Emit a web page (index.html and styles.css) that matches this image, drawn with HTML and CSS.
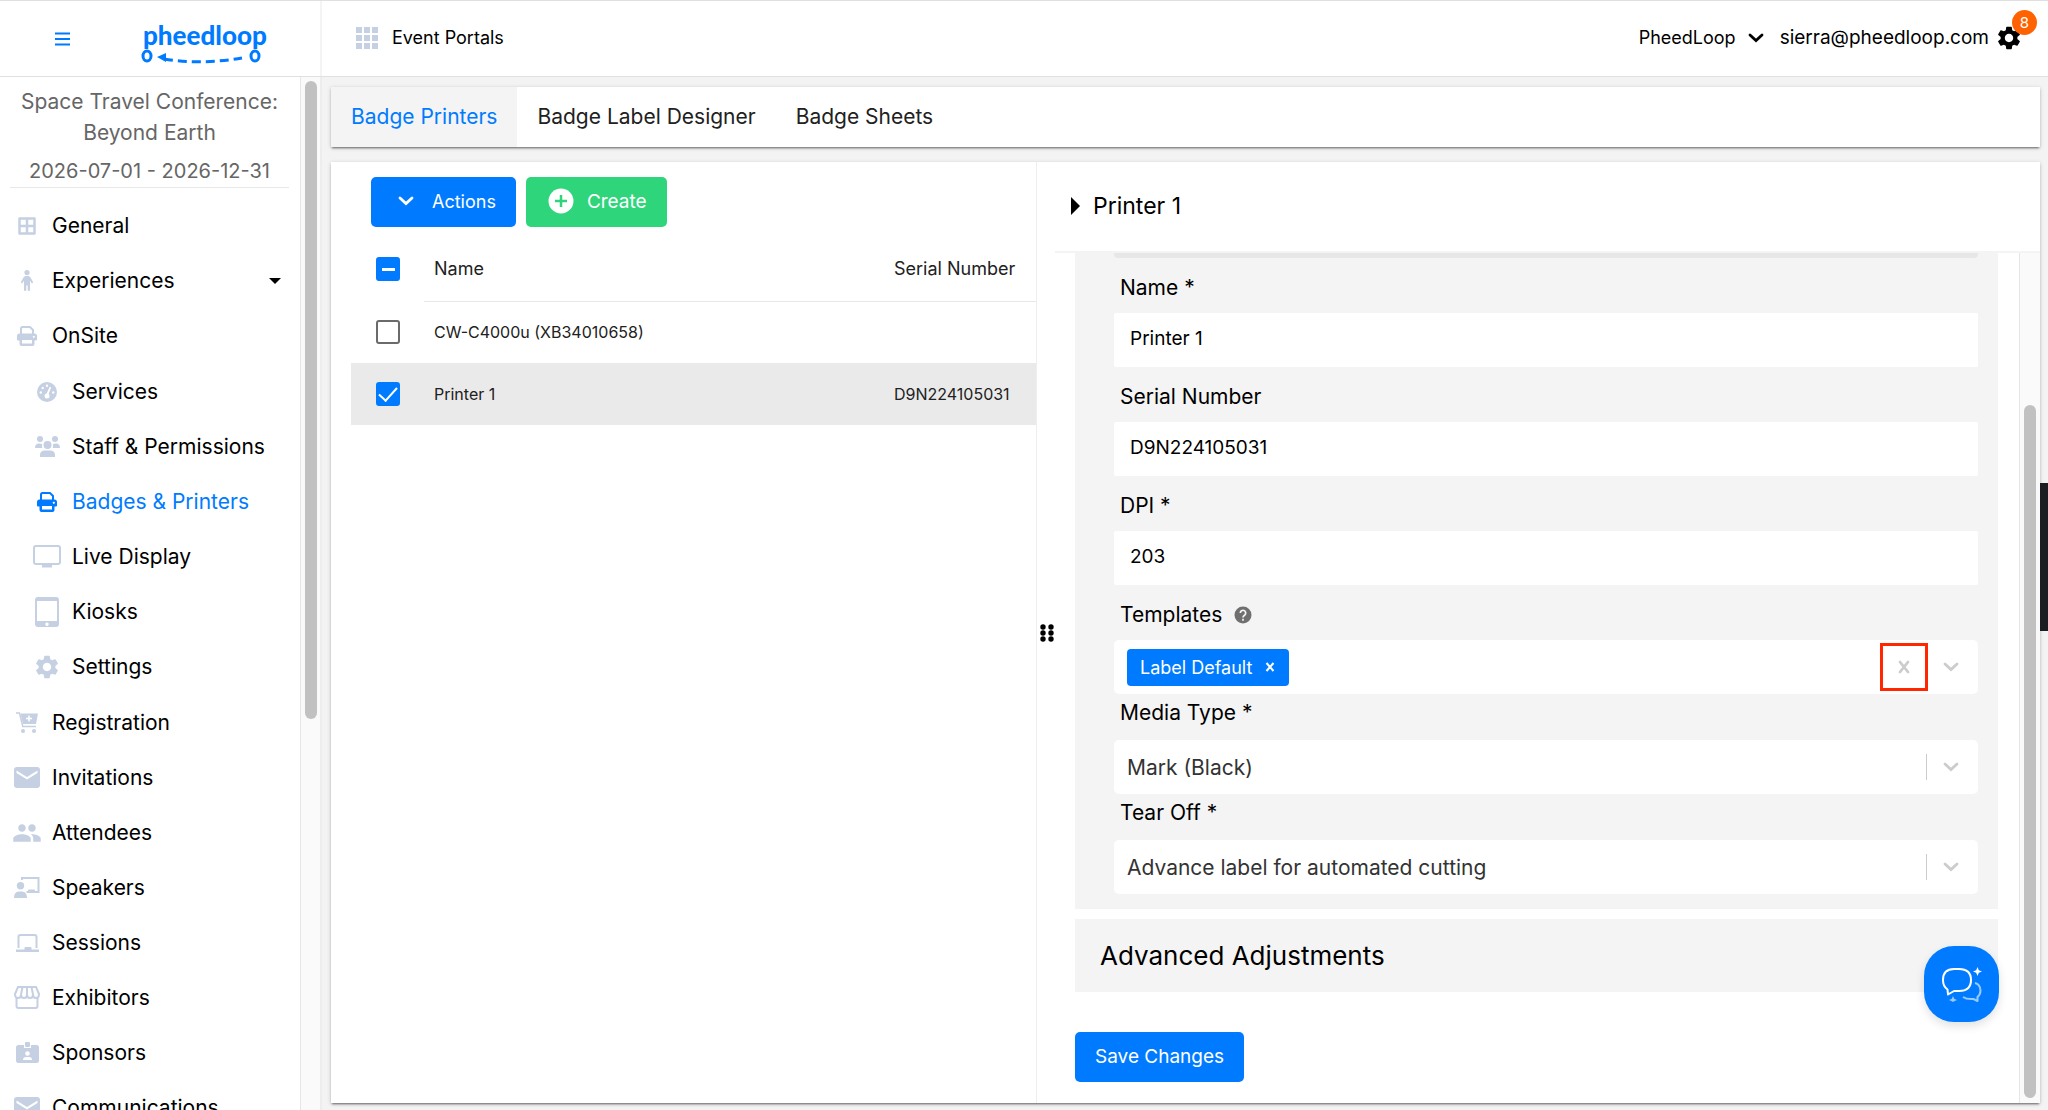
FILE: index.html
```html
<!DOCTYPE html>
<html lang="en">
<head>
    <meta charset="UTF-8">
    <meta name="viewport" content="width=device-width, initial-scale=1.0">
    <title>Badges &amp; Printers</title>
    <link rel="stylesheet" href="styles.css">
</head>
<body>
  <!-- Icons used more than once -->
  <svg class="sprite" aria-hidden="true">
    <symbol id="gear" viewBox="0 0 24 24"><path d="M19.14 12.94c.04-.3.06-.61.06-.94 0-.32-.02-.64-.07-.94l2.03-1.58c.18-.14.23-.41.12-.61l-1.92-3.32c-.12-.22-.37-.29-.59-.22l-2.39.96c-.5-.38-1.03-.7-1.62-.94l-.36-2.54c-.04-.24-.24-.41-.48-.41h-3.84c-.24 0-.43.17-.47.41l-.36 2.54c-.59.24-1.13.57-1.62.94l-2.39-.96c-.22-.08-.47 0-.59.22L2.74 8.87c-.12.21-.08.47.12.61l2.03 1.58c-.05.3-.09.63-.09.94s.02.64.07.94l-2.03 1.58c-.18.14-.23.41-.12.61l1.92 3.32c.12.22.37.29.59.22l2.39-.96c.5.38 1.03.7 1.62.94l.36 2.54c.05.24.24.41.48.41h3.84c.24 0 .44-.17.47-.41l.36-2.54c.59-.24 1.13-.56 1.62-.94l2.39.96c.22.08.47 0 .59-.22l1.92-3.32c.12-.22.07-.47-.12-.61l-2.01-1.58zM12 15.6c-1.98 0-3.6-1.62-3.6-3.6s1.62-3.6 3.6-3.6 3.6 1.62 3.6 3.6-1.62 3.6-3.6 3.6z"/></symbol>
    <symbol id="printer" viewBox="0 0 20 20"><path fill="none" stroke="currentColor" stroke-width="2" d="M4 8V2.500Q4 1 5.500 1H13l3 3v4"/><path fill-rule="evenodd" d="M2.500 7.500h15Q20 7.500 20 10v3.500q0 1-1 1h-1.500V18q0 2-2 2h-11q-2 0-2-2v-3.500H1q-1 0-1-1V10q0-2.500 2.500-2.500zM5 14v3.500h10V14zM16.800 9.800a1 1 0 1 0 .01 0z"/></symbol>
    <symbol id="mail" viewBox="0 0 26 22"><path fill-rule="evenodd" d="M3 0h20q3 0 3 3v15q0 3-3 3H3q-3 0-3-3V3q0-3 3-3zm-.5 3.500V6L13 12.500 23.500 6V3.500L13 10z"/></symbol>
    <symbol id="chevron" viewBox="0 0 16 10"><path d="M2 2l6 5.500L14 2" fill="none" stroke="currentColor" stroke-width="2.800" stroke-linecap="round"/></symbol>
  </svg>

  <header class="topbar">
    <div class="brand">
      <button class="menu-btn" aria-label="Toggle menu">
        <svg width="16" height="14" viewBox="0 0 16 14"><path d="M0 1.500h15M0 7h15M0 12.500h15" stroke="currentColor" stroke-width="2"/></svg>
      </button>
      <a href="#" class="logo" aria-label="pheedloop">
        <svg width="130" height="52" viewBox="0 0 130 52">
          <text x="5" y="32" class="logo-text">pheedloop</text>
          <ellipse cx="9" cy="43" rx="4" ry="5"/>
          <ellipse cx="117" cy="43" rx="4" ry="5"/>
          <path class="logo-dash" d="M26 46q36 6 78-1" />
          <path class="logo-tip" d="M19 44l9-4v9z"/>
        </svg>
      </a>
    </div>
    <div class="topbar-main">
      <a href="#" class="portals">
        <svg width="22" height="22" viewBox="0 0 22 22"><path d="M0 0h6v6H0zM8 0h6v6H8zM16 0h6v6h-6zM0 8h6v6H0zM8 8h6v6H8zM16 8h6v6h-6zM0 16h6v6H0zM8 16h6v6H8zM16 16h6v6h-6z"/></svg>
        <span>Event Portals</span>
      </a>
      <div class="account">
        <button class="org">PheedLoop <svg width="16" height="10"><use href="#chevron"/></svg></button>
        <span class="email">sierra@pheedloop.com</span>
        <button class="account-settings" aria-label="Settings">
          <svg width="28" height="28"><use href="#gear"/></svg>
          <span class="count">8</span>
        </button>
      </div>
    </div>
  </header>

  <div class="layout">
    <aside class="sidebar">
      <div class="sidebar-content">
        <div class="event">
          <p class="event-name">Space Travel Conference: Beyond Earth</p>
          <p class="event-dates">2026-07-01 - 2026-12-31</p>
        </div>
        <nav>
          <ul class="menu">
            <li><a href="#"><span class="icon"><svg width="18" height="18" viewBox="0 0 18 18"><path d="M1.500 1.500h15v15h-15zM9 1v16M1 9h16" fill="none" stroke="currentColor" stroke-width="2.500" stroke-linejoin="round"/></svg></span>General</a></li>
            <li><a href="#"><span class="icon"><svg width="12" height="21" viewBox="0 0 12 21"><circle cx="6" cy="2.600" r="2.600"/><path d="M4.500 6h3q1 0 2 1.500l2.300 4q.5 1.500-.7 1.700-.7 0-1-.6L9 10.500V20q0 1-1 1-1.300 0-1.300-1v-4.500H5.300V20q0 1-1.300 1-1 0-1-1v-9.500l-1.100 2.100q-.3.600-1 .6-1.200-.2-.7-1.700l2.300-4Q3.500 6 4.500 6z"/></svg></span>Experiences<span class="caret"></span></a></li>
            <li><a href="#"><span class="icon"><svg width="20" height="20"><use href="#printer"/></svg></span>OnSite</a>
              <ul class="submenu">
                <li><a href="#"><span class="icon"><svg width="20" height="20" viewBox="0 0 20 20"><circle cx="10" cy="10" r="10"/><g fill="#fff"><circle cx="3.800" cy="10.500" r="1.200"/><circle cx="5.700" cy="6" r="1.200"/><circle cx="10" cy="3.800" r="1.200"/><circle cx="16.200" cy="10.500" r="1.200"/><circle cx="10" cy="14" r="2.500"/><path d="M9 13l3.700-8.200 1.500.7L11 13.500z"/></g></svg></span>Services</a></li>
                <li><a href="#"><span class="icon"><svg width="25" height="21" viewBox="0 0 25 21"><circle cx="5" cy="3" r="3"/><circle cx="20" cy="3" r="3"/><circle cx="12.500" cy="9" r="4"/><path d="M0 12q0-4.500 4-4.500 2 0 3.200.8-.7 2 .2 3.700zM25 12q0-4.500-4-4.500-2 0-3.200.8.700 2-.2 3.700zM5 21v-2q0-4.500 5-4.500h5q5 0 5 4.500v2z"/></svg></span>Staff &amp; Permissions</a></li>
                <li><a href="#" class="active"><span class="icon"><svg width="20" height="20"><use href="#printer"/></svg></span>Badges &amp; Printers</a></li>
                <li><a href="#"><span class="icon"><svg width="28" height="23" viewBox="0 0 28 23"><rect x="1" y="1" width="26" height="18" rx="2" fill="none" stroke="currentColor" stroke-width="2"/><path d="M9 20h10v2.500H9z"/></svg></span>Live Display</a></li>
                <li><a href="#"><span class="icon"><svg width="24" height="30" viewBox="0 0 24 30"><path fill-rule="evenodd" d="M3 0h18q3 0 3 3v24q0 3-3 3H3q-3 0-3-3V3q0-3 3-3zM2 4v20h20V4zM12 25.500a1.700 1.700 0 1 0 .01 0z"/></svg></span>Kiosks</a></li>
                <li><a href="#"><span class="icon"><svg width="28" height="28"><use href="#gear"/></svg></span>Settings</a></li>
              </ul>
            </li>
            <li><a href="#"><span class="icon"><svg width="22" height="21" viewBox="0 0 22 21"><path d="M0 1h3.500l3.300 13.500H20" fill="none" stroke="currentColor" stroke-width="1.500"/><path d="M4.500 1.500H22L20 12H7z"/><circle cx="7" cy="19" r="2"/><circle cx="18" cy="19" r="2"/><path d="M13 3.500v6M10 6.500h6" stroke="#fff" stroke-width="1.500"/></svg></span>Registration</a></li>
            <li><a href="#"><span class="icon"><svg width="26" height="22"><use href="#mail"/></svg></span>Invitations</a></li>
            <li><a href="#"><span class="icon"><svg width="30" height="30" viewBox="0 0 24 24"><path d="M16 11c1.660 0 2.990-1.340 2.990-3S17.660 5 16 5c-1.660 0-3 1.340-3 3s1.340 3 3 3zm-8 0c1.660 0 2.990-1.340 2.990-3S9.660 5 8 5C6.340 5 5 6.340 5 8s1.340 3 3 3zm0 2c-2.330 0-7 1.170-7 3.500V19h14v-2.500c0-2.330-4.670-3.500-7-3.500zm8 0c-.29 0-.62.02-.97.05 1.160.84 1.970 1.970 1.970 3.450V19h6v-2.500c0-2.330-4.670-3.500-7-3.500z"/></svg></span>Attendees</a></li>
            <li><a href="#"><span class="icon"><svg width="26" height="21" viewBox="0 0 26 21"><circle cx="6.500" cy="8.700" r="3.700"/><path d="M0 21q0-6.500 5-6.500h3q5 0 5 6.500zM14 15v-1.500q0-1 1-1h5q1 0 1 1V15z"/><path d="M8 3V1h16.500v14H12.500" fill="none" stroke="currentColor" stroke-width="2"/></svg></span>Speakers</a></li>
            <li><a href="#"><span class="icon"><svg width="23" height="18" viewBox="0 0 23 18"><path d="M2.500 14V3q0-2 2-2h14q2 0 2 2v11" fill="none" stroke="currentColor" stroke-width="2"/><path d="M0 15.500h8.500V14q0-1 1-1h5q1 0 1 1v1.500H23V18H0z"/></svg></span>Sessions</a></li>
            <li><a href="#"><span class="icon"><svg width="26" height="23" viewBox="0 0 26 23"><g fill="none" stroke="currentColor" stroke-width="2"><path d="M4 1h18l3 7q0 4-3 4t-3-3.500q0 3.500-3 3.500t-3-3.500q0 3.500-3 3.500T7 8.500Q7 12 4 12T1 8zM8.500 1L7 8.500M13 1v7.500M17.500 1L19 8.500"/><path d="M2.500 12v8q0 2 2 2h17q2 0 2-2v-8"/></g></svg></span>Exhibitors</a></li>
            <li><a href="#"><span class="icon"><svg width="23" height="21" viewBox="0 0 23 21"><path d="M2.500 3H8v3h7V3h5.500Q23 3 23 5.500v13q0 2.500-2.500 2.500h-18Q0 21 0 18.500v-13Q0 3 2.500 3z"/><rect x="9" y="0" width="5" height="5" rx="1"/><circle cx="11.500" cy="11.500" r="2.300" fill="#fff"/><path d="M7 18q0-3 3-3h3q3 0 3 3z" fill="#fff"/></svg></span>Sponsors</a></li>
            <li><a href="#"><span class="icon"><svg width="26" height="22"><use href="#mail"/></svg></span>Communications</a></li>
          </ul>
        </nav>
      </div>
      <div class="scroll-track sidebar-track"><div class="scroll-thumb"></div></div>
    </aside>

    <main class="main">
      <nav class="tabs">
        <a href="#" class="tab selected">Badge Printers</a>
        <a href="#" class="tab">Badge Label Designer</a>
        <a href="#" class="tab">Badge Sheets</a>
      </nav>

      <div class="panel">
        <section class="list">
          <div class="toolbar">
            <button class="btn btn-primary"><svg width="16" height="10"><use href="#chevron"/></svg>Actions</button>
            <button class="btn btn-success"><svg width="26" height="26" viewBox="0 0 26 26"><circle cx="13" cy="13" r="12.500" fill="#fff"/><path d="M13 7v12M7 13h12" stroke="#2fd57b" stroke-width="2.500"/></svg>Create</button>
          </div>
          <table class="printers">
            <thead>
              <tr>
                <th class="check"><input type="checkbox" class="partial" aria-label="Select all" checked></th>
                <th>Name</th>
                <th class="serial-col">Serial Number</th>
              </tr>
            </thead>
            <tbody>
              <tr>
                <td class="check"><input type="checkbox" aria-label="Select CW-C4000u"></td>
                <td>CW-C4000u (XB34010658)</td>
                <td></td>
              </tr>
              <tr class="picked">
                <td class="check"><input type="checkbox" aria-label="Select Printer 1" checked></td>
                <td>Printer 1</td>
                <td>D9N224105031</td>
              </tr>
            </tbody>
          </table>
        </section>

        <section class="detail">
          <button class="grip" aria-label="Resize panel">
            <svg width="14" height="18" viewBox="0 0 14 18"><circle cx="3" cy="3" r="2.700"/><circle cx="11" cy="3" r="2.700"/><circle cx="3" cy="9" r="2.700"/><circle cx="11" cy="9" r="2.700"/><circle cx="3" cy="15" r="2.700"/><circle cx="11" cy="15" r="2.700"/></svg>
          </button>
          <div class="detail-main">
            <h1 class="detail-title"><span class="arrow"></span>Printer 1</h1>
            <div class="detail-scroll">
              <form class="form">
                <div class="fields">
                  <div class="field-end"></div>
                  <label for="name">Name *</label>
                  <input type="text" id="name" value="Printer 1">
                  <label for="serial">Serial Number</label>
                  <input type="text" id="serial" value="D9N224105031">
                  <label for="dpi">DPI *</label>
                  <input type="text" id="dpi" value="203">
                  <label for="templates">Templates
                    <svg class="help" width="18" height="18" viewBox="0 0 18 18"><circle cx="9" cy="9" r="8.500"/><path d="M6.300 7a2.700 2.700 0 1 1 4.600 1.900C9.800 9.800 9 10.200 9 11.500M9 12.800v1.900" fill="none" stroke="#f4f4f4" stroke-width="1.700"/></svg>
                  </label>
                  <div class="multi">
                    <span class="chip">Label Default <button type="button" aria-label="Remove Label Default"><svg width="10" height="10" viewBox="0 0 10 10"><path d="M1.500 1l7 8M8.500 1l-7 8" stroke="currentColor" stroke-width="2"/></svg></button></span>
                    <input type="text" id="templates">
                    <button type="button" class="clear" aria-label="Clear templates"><svg width="12" height="14" viewBox="0 0 12 14"><path d="M2 2l8 10M10 2L2 12" stroke="currentColor" stroke-width="2.800" stroke-linecap="round"/></svg></button>
                    <button type="button" class="open" aria-label="Show templates"><svg width="16" height="10"><use href="#chevron"/></svg></button>
                  </div>
                  <label for="media" class="close">Media Type *</label>
                  <div class="dropdown">
                    <select id="media"><option>Mark (Black)</option></select>
                    <span class="open"><svg width="16" height="10"><use href="#chevron"/></svg></span>
                  </div>
                  <label for="tear" class="close">Tear Off *</label>
                  <div class="dropdown">
                    <select id="tear"><option>Advance label for automated cutting</option></select>
                    <span class="open"><svg width="16" height="10"><use href="#chevron"/></svg></span>
                  </div>
                </div>
                <h2 class="advanced">Advanced Adjustments</h2>
                <button type="button" class="btn btn-primary save">Save Changes</button>
              </form>
              <div class="scroll-track detail-track"><div class="scroll-thumb"></div></div>
            </div>
          </div>
        </section>
      </div>
    </main>
  </div>

  <button class="chat" aria-label="Chat">
    <svg width="42" height="36" viewBox="0 0 42 36">
      <path class="bubble" d="M7 28.500l-.5-5Q2 20.500 2 14 2 3 13 3h5q12 0 12 11t-12 11h-5z"/>
      <path class="bubble" opacity=".6" d="M34 17q5 1 5.500 7.500 0 4-3 6.500v4l-4-2q-7 .5-10.500-2"/>
      <path d="M36.500 1l1.300 3.200L41 5.500l-3.200 1.300-1.300 3.200-1.300-3.200L32 5.500l3.200-1.300z"/>
      <path opacity=".6" d="M12 30l1.200 2.800L16 34l-2.800 1.200L12 36l-1.200-.8L8 34l2.800-1.200z"/>
    </svg>
  </button>
  <div class="side-tab"></div>
</body>
</html>
```
FILE: styles.css
```css
* {
    box-sizing: border-box;
}

body {
    margin: 0;
    height: 100vh;
    display: flex;
    flex-direction: column;
    overflow: hidden;
    font-family: Inter, "Open Sans", sans-serif;
    font-size: 19px;
    color: #000;
    background: #f3f3f3;
}

button, input, select {
    font: inherit;
    color: inherit;
    border: none;
    background: none;
    margin: 0;
    padding: 0;
}

button {
    cursor: pointer;
}

a {
    color: inherit;
    text-decoration: none;
}

svg {
    display: block;
    fill: currentColor;
}

.sprite {
    position: absolute;
    width: 0;
    height: 0;
}

/* Top bar */
.topbar {
    display: flex;
    flex: none;
    height: 77px;
    background: #fff;
    border-top: 1px solid #e0e0e0;
    border-bottom: 1px solid #e0e0e0;
    font-size: 18px;
}

.brand {
    display: flex;
    align-items: center;
    gap: 67px;
    width: 322px;
    padding-left: 55px;
    border-right: 2px solid #f4f4f4;
    color: #007bff;
}

.logo-text {
    font-family: Lato, sans-serif;
    font-size: 26px;
    font-weight: 900;
}

.logo ellipse, .logo-dash {
    fill: none;
    stroke: currentColor;
    stroke-width: 3;
}

.logo-dash {
    stroke-dasharray: 9 5;
}

.topbar-main {
    flex: 1;
    display: flex;
    align-items: center;
    justify-content: space-between;
    padding: 0 25px 2px 34px;
}

.portals {
    display: flex;
    align-items: center;
    gap: 14px;
}

.portals svg {
    color: #c5d0e2;
}

.account {
    display: flex;
    align-items: center;
}

.org {
    display: flex;
    align-items: center;
    gap: 12px;
    margin-right: 16px;
}

.email {
    font-size: 19px;
}

.account-settings {
    position: relative;
    margin-left: 6px;
}

.count {
    position: absolute;
    top: -14px;
    right: -14px;
    width: 25px;
    height: 25px;
    border-radius: 50%;
    background: #ff6200;
    color: #fff;
    font-size: 15px;
    line-height: 25px;
}

/* Sidebar */
.layout {
    flex: 1;
    display: flex;
    min-height: 0;
}

.sidebar {
    display: flex;
    flex: none;
    width: 322px;
    border-right: 2px solid #ededed;
    background: #fff;
}

.sidebar-content {
    flex: 1;
    overflow: hidden;
}

.event {
    margin: 0 11px 0 10px;
    padding-top: 9px;
    border-bottom: 1px solid #e8e8e8;
    color: #666;
    font-size: 21px;
    line-height: 31px;
    text-align: center;
}

.event p {
    margin: 0;
}

.event .event-dates {
    margin-top: 8px;
    font-size: 20px;
}

.menu, .submenu {
    list-style: none;
    margin: 0;
    padding: 0;
}

.menu {
    padding-top: 10px;
    font-size: 21px;
}

.submenu {
    padding: 1px 0;
}

.menu a {
    display: flex;
    align-items: center;
    gap: 10px;
    height: 55px;
    padding: 0 19px 0 12px;
}

.menu .submenu a {
    padding-left: 32px;
}

.icon {
    display: flex;
    justify-content: center;
    width: 30px;
    color: #c5d0e2;
}

.menu .active, .active .icon {
    color: #007bff;
}

.caret {
    margin-left: auto;
    border: 6px solid transparent;
    border-top-color: #000;
    border-bottom: none;
}

/* Scroll tracks */
.scroll-track {
    flex: none;
    background: #fafafa;
    border-left: 1px solid #e6e6e6;
}

.scroll-thumb {
    width: 12px;
    margin-left: 4px;
    border-radius: 6px;
    background: #c1c1c1;
}

.sidebar-track {
    width: 20px;
    padding-top: 4px;
}

.sidebar-track .scroll-thumb {
    height: 62%;
}

.detail-track {
    display: flex;
    align-items: flex-end;
    width: 21px;
    padding-bottom: 5px;
}

.detail-track .scroll-thumb {
    height: 82%;
}

/* Main area */
.main {
    flex: 1;
    display: flex;
    flex-direction: column;
    gap: 15px;
    min-width: 0;
    padding: 10px 8px 7px 9px;
}

.tabs, .panel {
    background: #fff;
    box-shadow: 0 1px 4px rgba(0, 0, 0, 0.2), 0 2px 2px -1px rgba(0, 0, 0, 0.5);
}

.tabs {
    display: flex;
    font-size: 21px;
    line-height: 60px;
    color: #212121;
}

.tab {
    padding: 0 20px;
}

.tab.selected {
    background: #f4f4f4;
    color: #007bff;
}

.panel {
    flex: 1;
    display: grid;
    grid-template-columns: minmax(0, 706fr) minmax(0, 1003fr);
    min-height: 0;
}

/* Printer list */
.list {
    padding: 15px 0 0 20px;
    border-right: 1px solid #eee;
}

.toolbar {
    display: flex;
    gap: 10px;
    padding-left: 20px;
}

.btn {
    display: flex;
    align-items: center;
    height: 50px;
    padding: 0 20px 2px;
    border-radius: 5px;
    color: #fff;
    font-size: 18px;
}

.btn-primary {
    background: #007bff;
}

.btn-success {
    gap: 13px;
    background: #2fd57b;
    padding-left: 22px;
    font-size: 19px;
}

.toolbar .btn-primary {
    gap: 18px;
    padding-left: 27px;
}

.btn.save {
    font-size: 19px;
}

.printers {
    width: 100%;
    margin-top: 10px;
    border-collapse: collapse;
    font-size: 16px;
    color: #212121;
    text-align: left;
}

.printers th, .printers td {
    height: 62px;
    padding: 0 0 0 10px;
    font-weight: 400;
}

.printers th {
    height: 64px;
    border-bottom: 1px solid #e8e8e8;
    font-size: 18px;
}

.printers th.check {
    border-bottom: none;
}

.printers .check {
    width: 73px;
    padding: 0 0 0 25px;
}

.printers .serial-col {
    width: 152px;
}

.picked {
    background: #eaeaea;
}

.check input {
    appearance: none;
    display: grid;
    place-items: center;
    width: 24px;
    height: 24px;
    border: 2px solid #6b6b6b;
    border-radius: 3px;
    background: #fff;
}

.check input:checked {
    border-color: #007bff;
    background: #007bff;
}

.check input:checked::after {
    content: "";
    width: 16px;
    height: 8px;
    margin-bottom: 4px;
    border: solid #fff;
    border-width: 0 0 2px 2px;
    transform: rotate(-48deg);
}

.check input.partial:checked::after {
    width: 13px;
    height: 3px;
    margin: 0;
    border: none;
    background: #fff;
    transform: none;
}

/* Printer details */
.detail {
    display: flex;
    min-height: 0;
}

.grip {
    flex: none;
    width: 18px;
    padding-left: 3px;
}

.detail-main {
    flex: 1;
    display: flex;
    flex-direction: column;
    min-width: 0;
}

.detail-title {
    display: flex;
    align-items: center;
    gap: 13px;
    flex: none;
    height: 91px;
    margin: 0;
    padding: 0 16px 2px;
    border-bottom: 2px solid #f4f4f4;
    font-size: 23px;
    font-weight: 400;
}

.arrow {
    border: 9px solid transparent;
    border-left-color: #000;
    border-right: none;
}

.detail-scroll {
    flex: 1;
    display: flex;
    min-height: 0;
}

.form {
    flex: 1;
    overflow: hidden;
    padding: 0 21px 0 20px;
}

.fields {
    display: flex;
    flex-direction: column;
    padding: 0 20px 15px 39px;
    background: #f4f4f4;
}

.field-end {
    height: 5px;
    border-radius: 0 0 4px 4px;
    background: #e7e7e7;
}

.fields label {
    display: flex;
    align-items: center;
    gap: 12px;
    padding: 15px 6px 10px;
    font-size: 21px;
    line-height: 30px;
}

.fields label.close {
    padding: 4px 6px 12px;
}

.help {
    color: #6f6f6f;
}

.fields > input {
    height: 54px;
    padding: 0 16px 4px;
    border-radius: 2px;
    background: #fff;
}

.multi, .dropdown {
    display: flex;
    align-items: center;
    height: 54px;
    border-radius: 5px;
    background: #fff;
    color: #333;
}

.multi {
    padding-left: 13px;
}

.multi input {
    flex: 1;
}

.chip {
    display: flex;
    align-items: center;
    gap: 13px;
    height: 37px;
    padding: 0 14px 0 13px;
    border-radius: 4px;
    background: #007bff;
    color: #fff;
    font-size: 18px;
}

.clear {
    display: grid;
    place-items: center;
    width: 48px;
    height: 48px;
    border: 3px solid #ff2600;
    color: #ccc;
}

.open {
    width: 50px;
    padding: 0 19px 0 15px;
    color: #ccc;
}

.dropdown {
    position: relative;
}

.dropdown select {
    flex: 1;
    height: 54px;
    padding-left: 13px;
    appearance: none;
    font-size: 21px;
}

.dropdown .open {
    position: absolute;
    right: 0;
    width: 52px;
    padding: 8px 19px 8px 16px;
    border-left: 1px solid #ccc;
    pointer-events: none;
}

.advanced {
    margin: 10px 0 40px;
    padding: 0 25px;
    background: #f4f4f4;
    font-size: 26px;
    font-weight: 400;
    line-height: 73px;
}

/* Floating items */
.chat {
    position: fixed;
    right: 49px;
    bottom: 88px;
    display: grid;
    place-items: center;
    width: 75px;
    height: 76px;
    border-radius: 30px;
    background: #007bff;
    color: #fff;
    box-shadow: 0 4px 10px rgba(0, 0, 0, 0.12);
}

.bubble {
    fill: none;
    stroke: currentColor;
    stroke-width: 2;
    stroke-linejoin: round;
}

.side-tab {
    position: fixed;
    right: 0;
    top: 483px;
    width: 8px;
    height: 148px;
    background: #1c1d22;
}
```
